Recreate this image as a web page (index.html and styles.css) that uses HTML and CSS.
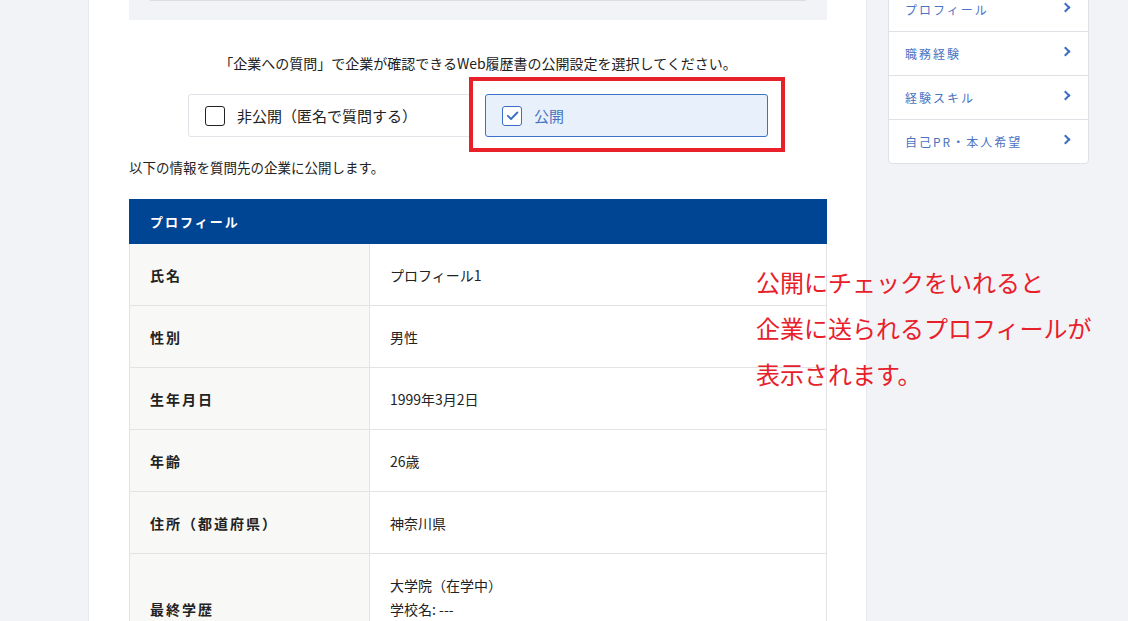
FILE: index.html
```html
<!DOCTYPE html>
<html lang="ja">
<head>
  <meta charset="UTF-8">
  <meta name="viewport" content="width=device-width, initial-scale=1.0">
  <title>Web履歴書の公開設定</title>
  <link rel="stylesheet" href="styles.css">
</head>
<body>
  <div class="page">
    <main class="main-card">
      <div class="prev-box"><div class="prev-line"></div></div>

      <p class="lead">「企業への質問」で企業が確認できるWeb履歴書の公開設定を選択してください。</p>

      <div class="options">
        <label class="option">
          <span class="check-box"></span>
          <span>非公開（匿名で質問する）</span>
        </label>
        <label class="option checked">
          <span class="check-box">
            <svg viewBox="0 0 20 20" width="17" height="17">
              <path d="M4.5 10.5l3.8 3.6 7.4-7.6" fill="none" stroke="#3b6fc6" stroke-width="2.2" stroke-linecap="round" stroke-linejoin="round"/>
            </svg>
          </span>
          <span>公開</span>
          <span class="highlight"></span>
        </label>
      </div>

      <p class="note">以下の情報を質問先の企業に公開します。</p>

      <section class="profile">
        <h2 class="profile-head">プロフィール</h2>
        <table class="profile-table">
          <tr><th>氏名</th><td>プロフィール1</td></tr>
          <tr><th>性別</th><td>男性</td></tr>
          <tr><th>生年月日</th><td>1999年3月2日</td></tr>
          <tr><th>年齢</th><td>26歳</td></tr>
          <tr><th>住所（都道府県）</th><td>神奈川県</td></tr>
          <tr class="multi">
            <th>最終学歴</th>
            <td>大学院（在学中）<br>学校名: ---<br>学部・学科名: ---</td>
          </tr>
        </table>
      </section>
    </main>

    <aside class="side-nav">
      <a class="side-link" href="#">プロフィール<span class="chev"></span></a>
      <a class="side-link" href="#">職務経験<span class="chev"></span></a>
      <a class="side-link" href="#">経験スキル<span class="chev"></span></a>
      <a class="side-link" href="#">自己PR・本人希望<span class="chev"></span></a>
    </aside>

    <p class="annotation">公開にチェックをいれると<br>企業に送られるプロフィールが<br>表示されます。</p>
  </div>
</body>
</html>
```

FILE: styles.css
```css
body, html {
  margin: 0;
  padding: 0;
  height: 100%;
  overflow: hidden;
  background-color: #f2f3f7;
  font-family: "Noto Sans CJK JP", "Noto Sans", sans-serif;
  color: #222;
}

.page {
  position: relative;
  display: flex;
  align-items: flex-start;
  gap: 21px;
  padding-left: 88px;
}

.main-card {
  width: 779px;
  min-height: 700px;
  padding: 0 39px 0 40px;
  box-sizing: border-box;
  background-color: #fff;
  border-left: 1px solid #e8e9ee;
  border-right: 1px solid #e8e9ee;
}

.prev-box {
  height: 20px;
  background-color: #f2f3f7;
  padding: 0 21px;
}

.prev-line {
  height: 1px;
  background-color: #dcdde2;
}

.lead {
  margin: 33px 0 0;
  font-size: 14px;
  line-height: 20px;
  text-align: center;
}

.options {
  display: flex;
  justify-content: center;
  gap: 14px;
  margin-top: 21px;
}

.option {
  position: relative;
  display: flex;
  align-items: center;
  gap: 12px;
  width: 283px;
  height: 43px;
  box-sizing: border-box;
  padding-left: 16px;
  border: 1px solid #e2e3e8;
  border-radius: 3px;
  font-size: 15px;
  background-color: #fff;
}

.check-box {
  display: flex;
  justify-content: center;
  align-items: center;
  width: 20px;
  height: 20px;
  box-sizing: border-box;
  border: 1.5px solid #222;
  border-radius: 3px;
}

.option.checked {
  background-color: #e8f1fb;
  border-color: #3b72c8;
  color: #4a73c2;
}

.option.checked .check-box {
  border-color: #3b6fc6;
  background-color: #fff;
}

.highlight {
  position: absolute;
  top: -18px;
  left: -17px;
  right: -18px;
  bottom: -16px;
  border: 4px solid #e8202a;
}

.note {
  margin: 20px 0 0;
  font-size: 13.5px;
  line-height: 20px;
}

.profile {
  margin-top: 22px;
}

.profile-head {
  margin: 0;
  height: 45px;
  padding-left: 21px;
  display: flex;
  align-items: center;
  background-color: #004494;
  color: #fff;
  font-size: 13px;
  font-weight: 700;
  letter-spacing: 2px;
}

.profile-table {
  width: 100%;
  border-collapse: collapse;
  font-size: 14px;
}

.profile-table th,
.profile-table td {
  height: 61px;
  padding: 0 20px;
  border: 1px solid #e3e3e3;
  text-align: left;
  vertical-align: middle;
}

.profile-table th {
  width: 199px;
  background-color: #f8f8f6;
  font-weight: 700;
  letter-spacing: 2px;
}

.profile-table tr:first-child th,
.profile-table tr:first-child td {
  border-top: none;
}

.profile-table .multi td {
  padding-top: 19px;
  padding-bottom: 19px;
  line-height: 24px;
}

.side-nav {
  width: 199px;
  margin-top: -13px;
  background-color: #fff;
  border: 1px solid #e0e1e6;
  border-radius: 0 0 4px 4px;
}

.side-link {
  display: flex;
  align-items: center;
  justify-content: space-between;
  height: 43px;
  padding: 0 19px 0 16px;
  border-bottom: 1px solid #e0e1e6;
  color: #4a73c2;
  font-size: 12px;
  letter-spacing: 2px;
  text-decoration: none;
}

.side-link:last-child {
  border-bottom: none;
}

.chev {
  width: 5px;
  height: 5px;
  border-top: 2.5px solid #3b6fc6;
  border-right: 2.5px solid #3b6fc6;
  transform: rotate(45deg);
  margin-top: -4px;
}

.annotation {
  position: absolute;
  top: 259px;
  left: 756px;
  margin: 0;
  font-size: 24px;
  line-height: 46px;
  color: #e8202a;
}
```
